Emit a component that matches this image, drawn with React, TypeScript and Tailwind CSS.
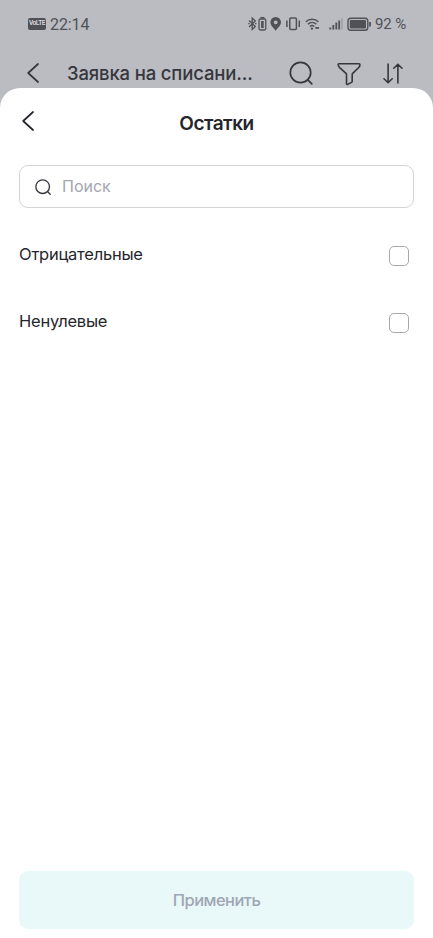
import { useState } from "react";

interface IconProps {
  className?: string;
}

function ChevronLeftIcon({ className }: IconProps) {
  return (
    <svg className={className} viewBox="0 0 12 20" fill="none" stroke="currentColor" strokeWidth="1.7" strokeLinecap="round" strokeLinejoin="round">
      <path d="M11 1 1.2 10 11 19" />
    </svg>
  );
}

function SearchIcon({ className }: IconProps) {
  return (
    <svg className={className} viewBox="0 0 24 24" fill="none" stroke="currentColor" strokeLinecap="round">
      <circle cx="11.5" cy="11.5" r="10.2" />
      <path d="m18.8 18.8 4 4" />
    </svg>
  );
}

function FunnelIcon({ className }: IconProps) {
  return (
    <svg className={className} viewBox="0 0 24 24" fill="none" stroke="currentColor" strokeWidth="1.6" strokeLinejoin="round">
      <path d="M2 1.800h20c.7 0 1.100.7.9 1.300l-.3 1.200c-.1.4-.3.7-.6 1l-6.300 6.100c-.3.3-.5.7-.5 1.200v6.600c0 .5-.3 1-.7 1.200l-3.800 2c-.6.3-1.200-.1-1.200-.8v-9c0-.5-.2-.9-.5-1.200L2.400 5.300c-.3-.3-.5-.6-.6-1l-.6-1.200c-.2-.6.2-1.300.8-1.300Z" />
    </svg>
  );
}

function SortIcon({ className }: IconProps) {
  return (
    <svg className={className} viewBox="0 0 20 21" fill="none" stroke="currentColor" strokeWidth="1.6" strokeLinecap="round" strokeLinejoin="round">
      <path d="M5.100 1v18.800M1 15.800l4.100 4 4.100-4M14.900 20V1.200M10.800 5.200l4.100-4 4.100 4" />
    </svg>
  );
}

function StatusIcons() {
  return (
    <svg className="h-4 w-[124px] shrink-0" viewBox="247 16 124 16" fill="none" stroke="currentColor" strokeWidth="1.3">
      {/* bluetooth */}
      <path d="m249 20.500 6.300 6-3.100 3V18l3.100 3-6.300 6" />
      <path d="M248.200 23.700h1.400M255 23.700h1.400" />
      {/* device battery */}
      <path d="M260.300 17.700h4.200" strokeWidth="1.500" />
      <rect x="259" y="19" width="6.800" height="11" rx="1.500" />
      <path d="M262.400 21v7" strokeWidth="2.600" />
      {/* location */}
      <path fillRule="evenodd" d="M275.700 17a5.300 5.300 0 0 0-5.300 5.300c0 3.400 3.500 5.700 5.300 8.500 1.800-2.800 5.300-5.100 5.300-8.500a5.300 5.300 0 0 0-5.300-5.300Zm0 3.400a1.900 1.900 0 1 1 0 3.800 1.900 1.900 0 0 1 0-3.800Z" fill="currentColor" stroke="none" />
      {/* vibrate */}
      <rect x="289.800" y="18" width="6.600" height="11.600" rx="1" strokeWidth="1.500" />
      <path d="M286.900 20.500v6.600M299.300 20.500v6.600" strokeWidth="1.500" />
      {/* wifi */}
      <path d="M305.800 21.700c3.600-3.400 9-3.400 12.600 0M307.800 24.200c2.500-2.300 6.100-2.300 8.600 0M309.900 26.500c1.300-1.100 3.100-1.100 4.400 0" strokeWidth="1.500" />
      <circle cx="311.900" cy="28.600" r="1.200" fill="currentColor" stroke="none" />
      <path d="M315.300 27.900h3.700" strokeWidth="1.800" />
      {/* signal */}
      <path d="M330.300 27.500v2M333.300 25v4.500M336.300 22.500v7M339.200 20.500v9" strokeWidth="1.800" />
      <path d="M342 18.300v11.200" strokeWidth="1.200" opacity=".35" />
      {/* battery */}
      <rect x="348" y="18.200" width="19.800" height="12" rx="2.800" strokeWidth="1.400" />
      <rect x="349.800" y="20" width="16.200" height="8.400" rx="1.200" fill="currentColor" stroke="none" />
      <path d="M370 22v4.500" strokeWidth="1.800" />
    </svg>
  );
}

function StatusBar() {
  return (
    <div className="flex h-12 items-center pl-7 pr-[26px] font-[Roboto,sans-serif] text-[#505157]">
      <span className="flex h-3 w-[18px] items-center justify-center rounded-[2px] bg-[#505157] text-[6.500px] font-bold tracking-[-0.4px] text-[#d2d3d8]">
        VoLTE
      </span>
      <span className="ml-1 mt-px text-[16px] leading-none tracking-[-0.1px]">22:14</span>
      <div className="ml-auto flex items-center">
        <StatusIcons />
        <span className="ml-1 mt-px w-8 whitespace-nowrap text-[15px] leading-none tracking-[-0.1px]">92 %</span>
      </div>
    </div>
  );
}

function PageHeader() {
  return (
    <header className="flex h-[50px] items-center pl-[27px] pr-[29px] text-[#36373d]">
      <ChevronLeftIcon className="h-5 w-3 shrink-0" />
      <h1 className="ml-7 mt-px w-[186px] whitespace-nowrap text-[18.500px] font-medium tracking-[-0.15px]">Заявка на списани...</h1>
      <div className="ml-auto mr-px flex items-center">
        <SearchIcon className="size-6 stroke-[1.7]" />
        <FunnelIcon className="ml-6 mt-px size-6" />
        <SortIcon className="ml-[22px] h-[21px] w-5" />
      </div>
    </header>
  );
}

const options = ["Отрицательные", "Ненулевые"];

function App() {
  const [query, setQuery] = useState("");

  return (
    <div className="flex h-[938px] w-full flex-col overflow-hidden bg-[#bbbcc2] font-[Inter,sans-serif]">
      <StatusBar />
      <PageHeader />
      <main className="relative -mt-[10px] flex flex-1 flex-col rounded-t-[20px] bg-white px-[19px] pb-[9px] text-[#25262b]">
        <div className="flex h-[77px] items-center">
          <button type="button" className="-mt-[11px] ml-[3px] w-3" aria-label="Назад">
            <ChevronLeftIcon className="h-5 w-3" />
          </button>
          <h2 className="-mt-[5px] mr-[15px] flex-1 text-center text-[19px] font-semibold tracking-[-0.5px]">Остатки</h2>
        </div>
        <label className="flex h-[43px] shrink-0 items-center rounded-[9px] border-[1.500px] border-[#d3d3d8] pl-[15px]">
          <SearchIcon className="size-4 stroke-2 text-[#36373d]" />
          <input
            type="text"
            value={query}
            onChange={(e) => setQuery(e.target.value)}
            placeholder="Поиск"
            className="-mt-px ml-[11px] min-w-0 flex-1 text-[16px] outline-none placeholder:text-[#a4a6b2]"
          />
        </label>
        <ul className="mt-[14px]">
          {options.map((option) => (
            <li key={option}>
              <label className="flex h-[67px] items-center justify-between pr-[5px]">
                <span className="-mt-[3px] text-[16.500px] tracking-[-0.24px]">{option}</span>
                <input type="checkbox" className="size-5 appearance-none rounded-[5px] border-[1.500px] border-[#a9a9ad] checked:bg-teal-400" />
              </label>
            </li>
          ))}
        </ul>
        <button type="button" disabled className="mt-auto h-[58px] shrink-0 rounded-[9px] bg-[#e9f8f8] text-[16.500px] font-medium tracking-[-0.550px] text-[#a0a6b4]">
          Применить
        </button>
      </main>
    </div>
  );
}

export default App;
